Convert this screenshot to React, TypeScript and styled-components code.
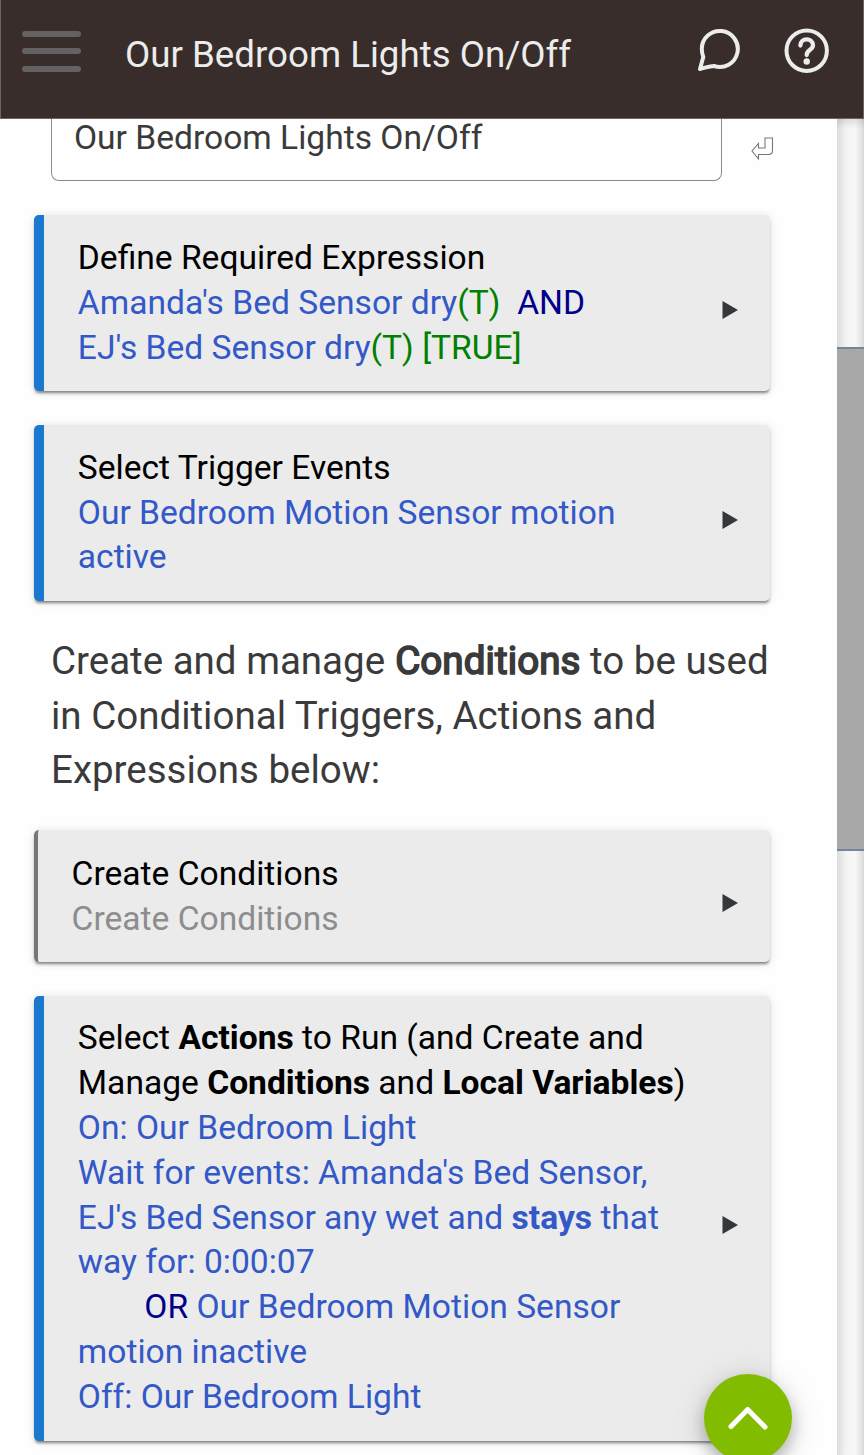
import React from 'react';
import styled, { createGlobalStyle } from 'styled-components';

const GlobalStyle = createGlobalStyle`
  * { box-sizing: border-box; }
  html, body { margin: 0; background: #fefefe; overflow: hidden; }
  body { font-family: Roboto, sans-serif; color: #3a3a3a; }
`;

const Screen = styled.div`
  position: relative;
  height: 1455px;
  overflow: hidden;
  display: flex;
  flex-direction: column;
`;

const Header = styled.header`
  height: 119px;
  flex: none;
  display: flex;
  align-items: flex-start;
  background: #382d2b;
  border-left: 1px solid #6d6563;
  border-right: 1px solid #6d6563;
  border-bottom: 1px solid #6d6563;
  color: #ececec;
`;

const MenuButton = styled.div`
  width: 59px;
  margin: 31px 0 0 21px;
  display: flex;
  flex-direction: column;
  gap: 11.3px;
`;

const MenuBar = styled.span`
  height: 6px;
  border-radius: 3px;
  background: #636161;
`;

const Title = styled.h1`
  flex: 1;
  margin: 34px 0 0 44px;
  font-size: 36.7px;
  line-height: 42px;
  font-weight: 400;
  white-space: nowrap;
`;

const HeaderIcon = styled.svg<{ $gap: number }>`
  display: block;
  margin: 27px ${(p) => p.$gap}px 0 0;
  fill: none;
  stroke: #ececec;
  stroke-linecap: round;
  stroke-linejoin: round;
`;

const Body = styled.div`
  flex: 1;
  min-height: 0;
  display: flex;
`;

const Content = styled.main`
  width: 837px;
  padding-left: 34px;
  overflow: hidden;
`;

const NameRow = styled.div`
  display: flex;
  margin-left: 17px;
  height: 62px;
`;

const NameField = styled.div`
  width: 671px;
  border: 1px solid #8c8c8c;
  border-top: 0;
  border-radius: 0 0 8px 8px;
  padding-left: 22px;
  font-size: 33.6px;
  line-height: 37px;
  white-space: nowrap;
`;

const EnterIcon = styled.svg`
  margin: 17px 0 0 29px;
  fill: none;
  stroke: #777;
  stroke-width: 1.1;
`;

const Card = styled.section<{ $muted?: boolean; $height: number }>`
  width: 736px;
  height: ${(p) => p.$height}px;
  margin-top: 34px;
  display: flex;
  align-items: center;
  justify-content: space-between;
  padding: 0 32px 0 ${(p) => (p.$muted ? 33.6 : 33.8)}px;
  background: #ebebeb;
  border-left: ${(p) => (p.$muted ? '4px solid #777' : '10px solid #1a78cf')};
  border-radius: 5px;
  box-shadow: 0 3px 3px -1px rgba(0, 0, 0, 0.45), 0 1px 10px rgba(0, 0, 0, 0.12);
`;

const CardText = styled.div<{ $top?: number; $bottom?: number }>`
  padding: ${(p) => p.$top ?? 0}px 0 ${(p) => p.$bottom ?? 0}px;
  font-size: 33.6px;
  line-height: 44.8px;
  color: #3358c8;
  white-space: nowrap;
`;

const Heading = styled.div`
  color: #000;
`;

const Tone = styled.span<{ $color: string }>`
  color: ${(p) => p.$color};
`;

const Indented = styled.div`
  padding-left: 66.5px;
`;

const Arrow = styled.svg`
  flex: none;
  margin-top: 13px;
  fill: #33383c;
`;

const Note = styled.p`
  margin: 33.4px 0 -1.4px 17px;
  font-size: 38.5px;
  line-height: 54.4px;
  white-space: nowrap;
`;

const Emphasis = styled.span`
  margin-left: 0.5px;
  -webkit-text-stroke: 1.7px currentColor;
  letter-spacing: 0.1px;
`;

const ScrollTrack = styled.div`
  width: 27px;
  padding-top: 228px;
  background: linear-gradient(rgba(0, 0, 0, 0.1), transparent 10px),
    linear-gradient(90deg, #dcdcdc, #f3f3f3 9px, #f8f8f8 18px, #e9e9e9 23px, #d8d8d8);
`;

const ScrollThumb = styled.div`
  height: 504px;
  background: #a8a8a8;
  border: solid #71859c;
  border-width: 2px 0;
`;

const TopButton = styled.button`
  position: absolute;
  left: 704px;
  top: 1374px;
  width: 88px;
  height: 88px;
  padding: 0;
  border: 0;
  border-radius: 50%;
  background: #82bc00;
  box-shadow: 0 8px 16px rgba(0, 0, 0, 0.25), 0 4px 34px rgba(0, 0, 0, 0.13);
`;

const Chevron = styled.svg`
  display: block;
  fill: none;
  stroke: #fff;
  stroke-width: 5;
  stroke-linecap: round;
  stroke-linejoin: round;
`;

const CardArrow = () => (
  <Arrow width="16" height="18" viewBox="0 0 16 18">
    <path d="M.5 0 16 9 .5 18Z" />
  </Arrow>
);

export default function App() {
  return (
    <>
      <GlobalStyle />
      <Screen>
        <Header>
          <MenuButton>
            <MenuBar />
            <MenuBar />
            <MenuBar />
          </MenuButton>
          <Title>Our Bedroom Lights On/Off</Title>
          <HeaderIcon $gap={43} width="44" height="46" viewBox="0 0 44 46" strokeWidth="4">
            <path d="M3 42 6.3 30C5.2 27 4.8 25 4.8 22A18 18 0 1 1 17 39C12 39 8 41 3 42Z" />
          </HeaderIcon>
          <HeaderIcon $gap={33} width="46" height="48" viewBox="0 0 46 48" strokeWidth="4">
            <circle cx="22.7" cy="23.7" r="20.2" />
            <path d="M16.4 18.5C16.4 10.5 29 10.5 29 18.3C29 23 22.7 22.5 22.7 28" strokeWidth="4.3" />
            <circle cx="22.7" cy="34.5" r="3.2" fill="#ececec" stroke="none" />
          </HeaderIcon>
        </Header>
        <Body>
          <Content>
            <NameRow>
              <NameField>Our Bedroom Lights On/Off</NameField>
              <EnterIcon width="24" height="26" viewBox="0 0 24 26">
                <path d="M14 2H21.5V14.5Q21.5 18.5 17.5 18.5H7.5V23L1 15 7.5 7.5V12H14Z" />
              </EnterIcon>
            </NameRow>
            <Card $height={176}>
              <CardText $top={0.8}>
                <Heading>Define Required Expression</Heading>
                Amanda's Bed Sensor dry<Tone $color="#008000">(T)</Tone>&nbsp;{' '}
                <Tone $color="#00008b">AND</Tone>
                <br />
                EJ's Bed Sensor dry<Tone $color="#008000">(T) [TRUE]</Tone>
              </CardText>
              <CardArrow />
            </Card>
            <Card $height={176}>
              <CardText>
                <Heading>Select Trigger Events</Heading>
                Our Bedroom Motion Sensor motion
                <br />
                active
              </CardText>
              <CardArrow />
            </Card>
            <Note>
              Create and manage <Emphasis>Conditions</Emphasis> to be used
              <br />
              in Conditional Triggers, Actions and
              <br />
              Expressions below:
            </Note>
            <Card $height={132} $muted>
              <CardText $top={1.4}>
                <Heading>Create Conditions</Heading>
                <Tone $color="#8d8d8d">Create Conditions</Tone>
              </CardText>
              <CardArrow />
            </Card>
            <Card $height={445}>
              <CardText $bottom={1.6}>
                <Heading>
                  Select <b>Actions</b> to Run (and Create and
                  <br />
                  Manage <b>Conditions</b> and <b>Local Variables</b>)
                </Heading>
                On: Our Bedroom Light
                <br />
                Wait for events: Amanda's Bed Sensor,
                <br />
                EJ's Bed Sensor any wet and <b>stays</b> that
                <br />
                way for: 0:00:07
                <Indented>
                  <Tone $color="#00008b">OR</Tone> Our Bedroom Motion Sensor
                </Indented>
                motion inactive
                <br />
                Off: Our Bedroom Light
              </CardText>
              <CardArrow />
            </Card>
          </Content>
          <ScrollTrack>
            <ScrollThumb />
          </ScrollTrack>
        </Body>
        <TopButton aria-label="Back to top">
          <Chevron width="88" height="88" viewBox="0 0 88 88">
            <path d="M27 52.5 43.7 35.5 61 53" />
          </Chevron>
        </TopButton>
      </Screen>
    </>
  );
}
